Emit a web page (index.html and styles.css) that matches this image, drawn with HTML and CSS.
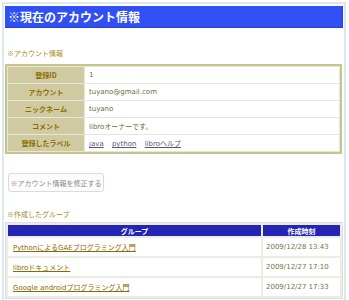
FILE: index.html
```html
<!DOCTYPE html>
<html lang="ja">
<head>
    <meta charset="UTF-8">
    <title>現在のアカウント情報</title>
    <link rel="stylesheet" href="styles.css">
</head>
<body>
    <div class="page">
        <h1 class="title">※現在のアカウント情報</h1>

        <p class="caption caption-account">※アカウント情報</p>
        <table class="account">
            <tr><th>登録ID</th><td>1</td></tr>
            <tr><th>アカウント</th><td>tuyano@gmail.com</td></tr>
            <tr><th>ニックネーム</th><td>tuyano</td></tr>
            <tr><th>コメント</th><td>libroオーナーです。</td></tr>
            <tr>
                <th>登録したラベル</th>
                <td class="labels"><a href="#">java</a> <a href="#">python</a> <a href="#">libroヘルプ</a></td>
            </tr>
        </table>

        <button class="edit">※アカウント情報を修正する</button>

        <p class="caption caption-group">※作成したグループ</p>
        <table class="groups">
            <tr><th>グループ</th><th class="time">作成時刻</th></tr>
            <tr><td><a href="#">PythonによるGAEプログラミング入門</a></td><td class="date">2009/12/28 13:43</td></tr>
            <tr><td><a href="#">libroドキュメント</a></td><td class="date">2009/12/27 17:10</td></tr>
            <tr><td><a href="#">Google androidプログラミング入門</a></td><td class="date">2009/12/27 17:33</td></tr>
        </table>
    </div>
</body>
</html>
```

FILE: styles.css
```css
body {
    margin: 2px 3px 0 2px;
    background-color: #ffffff;
    font-family: "DejaVu Sans", "Noto Sans CJK JP", sans-serif;
    font-size: 7px;
}

.page {
    border: 2px solid #dbe9ef;
    padding: 2px 1px 0 1px;
    height: 300px;
}

.title {
    margin: 0;
    height: 21px;
    line-height: 21px;
    padding-left: 3px;
    background-color: #3050f6;
    border-right: 1px solid #2a3fc8;
    border-bottom: 1px solid #2a3fc8;
    color: white;
    font-family: "Noto Sans CJK JP", sans-serif;
    font-size: 12px;
    font-weight: bold;
}

.caption {
    margin: 0;
    padding-left: 2px;
    color: #a08a20;
    font-family: "Noto Sans CJK JP", sans-serif;
    font-size: 7px;
    line-height: 10px;
}

.caption-account {
    margin-top: 20px;
    margin-bottom: 6px;
}

.account {
    width: 337px;
    border: 2px solid #c6c68c;
    border-spacing: 1px;
    background-color: #e6e6dc;
}

.account th {
    width: 76px;
    height: 16px;
    padding: 0;
    background-color: #cfcaa0;
    color: #8e6c00;
    font-family: "Noto Sans CJK JP", sans-serif;
    font-weight: bold;
    font-size: 7px;
}

.account td {
    padding: 0 0 0 4px;
    background-color: white;
    color: #6b6b3a;
    font-size: 7px;
}

.labels a {
    color: #555577;
    margin-right: 6px;
}

.edit {
    display: block;
    margin: 19px 0 0 3px;
    width: 96px;
    height: 19px;
    padding: 0;
    background-color: #fcfcfc;
    border: 1px solid #dcdcd4;
    border-radius: 3px;
    color: #8a8a8a;
    font-family: "Noto Sans CJK JP", sans-serif;
    font-size: 7px;
    white-space: nowrap;
}

.caption-group {
    margin-top: 17px;
    margin-bottom: 3px;
}

.groups {
    width: 338px;
    border: 1px solid #e0e0d8;
    border-spacing: 2px;
    background-color: #ecece6;
}

.groups th {
    height: 11px;
    padding: 0;
    background-color: #2525b5;
    color: white;
    font-family: "Noto Sans CJK JP", sans-serif;
    font-size: 7px;
    font-weight: bold;
}

.groups th.time {
    width: 77px;
}

.groups td {
    height: 18px;
    padding: 0 0 0 5px;
    background-color: white;
}

.groups a {
    color: #8d6a00;
}

.groups .date {
    padding-left: 3px;
    color: #74743f;
}
```
